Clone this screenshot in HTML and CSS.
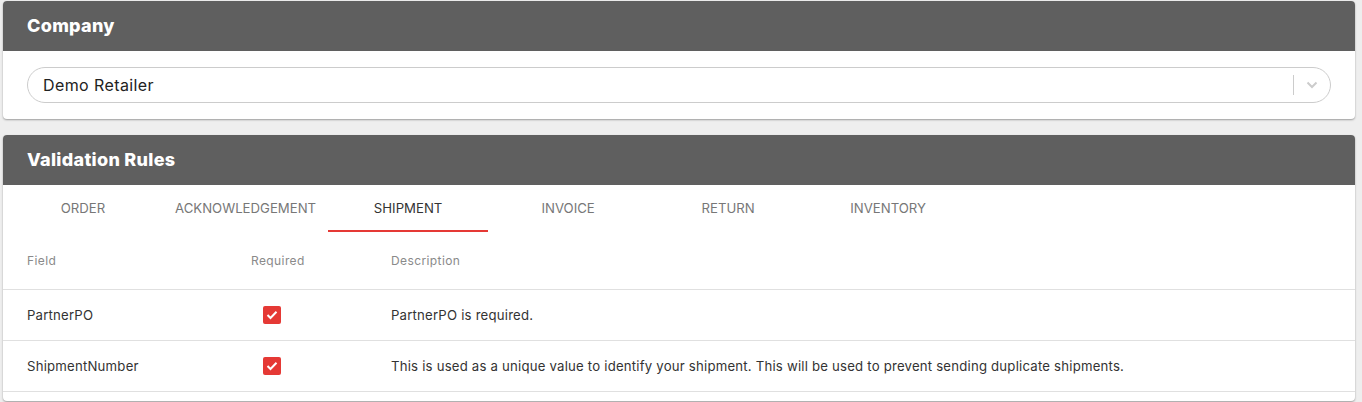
FILE: index.html
```html
<!DOCTYPE html>
<html lang="en">
<head>
    <meta charset="UTF-8">
    <meta name="viewport" content="width=device-width, initial-scale=1.0">
    <title>Validation Rules</title>
    <link rel="stylesheet" href="styles.css">
</head>
<body>
    <div class="card">
        <div class="card-header">Company</div>
        <div class="card-body">
            <div class="select">
                <span class="select-value">Demo Retailer</span>
                <span class="select-sep"></span>
                <span class="select-arrow">
                    <svg width="12" height="8" viewBox="0 0 12 8"><path d="M1.5 1.5 L6 6 L10.5 1.5" fill="none" stroke="#cccccc" stroke-width="2"/></svg>
                </span>
            </div>
        </div>
    </div>

    <div class="card card-table">
        <div class="card-header">Validation Rules</div>
        <div class="tabs">
            <div class="tab">ORDER</div>
            <div class="tab">ACKNOWLEDGEMENT</div>
            <div class="tab active">SHIPMENT</div>
            <div class="tab">INVOICE</div>
            <div class="tab">RETURN</div>
            <div class="tab">INVENTORY</div>
        </div>
        <table class="rules">
            <thead>
                <tr>
                    <th class="col-field">Field</th>
                    <th class="col-req">Required</th>
                    <th>Description</th>
                </tr>
            </thead>
            <tbody>
                <tr>
                    <td>PartnerPO</td>
                    <td class="center"><span class="check"><svg width="12" height="10" viewBox="0 0 12 10"><path d="M1.5 5 L4.5 8 L10.5 1.8" fill="none" stroke="#fff" stroke-width="2"/></svg></span></td>
                    <td>PartnerPO is required.</td>
                </tr>
                <tr>
                    <td>ShipmentNumber</td>
                    <td class="center"><span class="check"><svg width="12" height="10" viewBox="0 0 12 10"><path d="M1.5 5 L4.5 8 L10.5 1.8" fill="none" stroke="#fff" stroke-width="2"/></svg></span></td>
                    <td>This is used as a unique value to identify your shipment. This will be used to prevent sending duplicate shipments.</td>
                </tr>
            </tbody>
        </table>
    </div>
</body>
</html>
```

FILE: styles.css
```css
body {
    font-family: Inter, "Noto Sans", sans-serif;
    background-color: #eeeeee;
    margin: 0;
    padding: 1px 7px 0 3px;
    color: #222;
}

.card {
    background: #fff;
    border-radius: 4px;
    box-shadow: 0 1px 2px rgba(0,0,0,0.35);
    margin-bottom: 16px;
    overflow: hidden;
}

.card-table {
    padding-bottom: 9px;
}

.card-header {
    background-color: #5f5f5f;
    color: #fff;
    font-weight: 800;
    font-size: 18px;
    letter-spacing: 0.3px;
    height: 50px;
    line-height: 50px;
    padding: 0 24px;
}

.card-body {
    padding: 16px 24px 16px 24px;
}

.select {
    display: flex;
    align-items: center;
    height: 34px;
    border: 1px solid #cccccc;
    border-radius: 18px;
    padding-left: 15px;
}

.select-value {
    flex: 1;
    font-size: 16px;
    letter-spacing: 0.4px;
    color: #222;
}

.select-sep {
    width: 1px;
    height: 20px;
    background: #cccccc;
}

.select-arrow {
    width: 36px;
    display: flex;
    justify-content: center;
}

.tabs {
    display: flex;
    height: 47px;
}

.tab {
    min-width: 160px;
    padding: 1px 12px 0;
    box-sizing: border-box;
    display: flex;
    align-items: center;
    justify-content: center;
    font-size: 13.2px;
    color: #777;
    border-bottom: 2px solid transparent;
}

.tab.active {
    color: #333;
    border-bottom-color: #e53935;
}

.rules {
    width: 100%;
    border-collapse: collapse;
    font-size: 13.2px;
    letter-spacing: 0.2px;
}

.rules th {
    text-align: left;
    font-weight: 400;
    font-size: 12px;
    letter-spacing: 0.4px;
    color: #8a8a8a;
    height: 57px;
    padding: 0 24px;
    border-bottom: 1px solid #e0e0e0;
}

.rules td {
    height: 50px;
    padding: 0 24px;
    border-bottom: 1px solid #e0e0e0;
    color: #333;
}

.rules .col-field {
    width: 176px;
}

.rules .col-req {
    width: 92px;
}

.rules td.center {
    padding-left: 36px;
}

.check {
    display: inline-flex;
    align-items: center;
    justify-content: center;
    width: 18px;
    height: 18px;
    border-radius: 2px;
    background: #e53935;
    vertical-align: middle;
}
```
